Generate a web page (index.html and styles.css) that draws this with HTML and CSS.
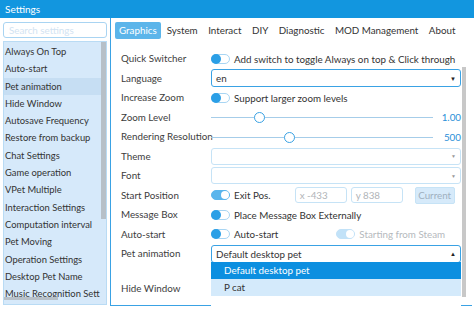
FILE: index.html
```html
<!DOCTYPE html>
<html>
<head>
<meta charset="utf-8">
<link rel="stylesheet" href="styles.css">
</head>
<body>
<div class="titlebar">Settings</div>
<div class="main">
  <aside class="sidebar">
    <div class="search">Search settings</div>
    <div class="list">
      <div class="items">
        <div class="item">Always On Top</div>
        <div class="item">Auto-start</div>
        <div class="item active">Pet animation</div>
        <div class="item">Hide Window</div>
        <div class="item">Autosave Frequency</div>
        <div class="item">Restore from backup</div>
        <div class="item">Chat Settings</div>
        <div class="item">Game operation</div>
        <div class="item">VPet Multiple</div>
        <div class="item">Interaction Settings</div>
        <div class="item">Computation interval</div>
        <div class="item">Pet Moving</div>
        <div class="item">Operation Settings</div>
        <div class="item">Desktop Pet Name</div>
        <div class="item">Music Recognition Sett</div>
      </div>
      <div class="vscroll"><div class="vthumb"></div></div>
      <div class="hscroll"></div>
    </div>
  </aside>
  <section class="panel">
    <nav class="tabs">
      <span class="tab selected">Graphics</span>
      <span class="tab">System</span>
      <span class="tab">Interact</span>
      <span class="tab">DIY</span>
      <span class="tab">Diagnostic</span>
      <span class="tab">MOD Management</span>
      <span class="tab">About</span>
    </nav>
    <div class="content">
      <div class="form">
        <div class="label">Quick Switcher</div>
        <div class="ctrl"><span class="toggle"></span><span>Add switch to toggle Always on top &amp; Click through</span></div>

        <div class="label">Language</div>
        <div class="ctrl"><div class="combo focus"><span>en</span><span class="arrow">▼</span></div></div>

        <div class="label">Increase Zoom</div>
        <div class="ctrl"><span class="toggle"></span><span>Support larger zoom levels</span></div>

        <div class="label">Zoom Level</div>
        <div class="ctrl slider-row"><div class="slider"><div class="track"></div><div class="knob" style="left: 43px"></div></div><span class="value">1.00</span></div>

        <div class="label">Rendering Resolution</div>
        <div class="ctrl slider-row"><div class="slider"><div class="track"></div><div class="knob" style="left: 73px"></div></div><span class="value">500</span></div>

        <div class="label">Theme</div>
        <div class="ctrl"><div class="combo"><span></span><span class="arrow small">▼</span></div></div>

        <div class="label">Font</div>
        <div class="ctrl"><div class="combo"><span></span><span class="arrow small">▼</span></div></div>

        <div class="label">Start Position</div>
        <div class="ctrl"><span class="toggle on"></span><span>Exit Pos.</span><span class="field fx">x -433</span><span class="field">y 838</span><span class="btn">Current</span></div>

        <div class="label">Message Box</div>
        <div class="ctrl"><span class="toggle"></span><span>Place Message Box Externally</span></div>

        <div class="label">Auto-start</div>
        <div class="ctrl"><span class="toggle"></span><span>Auto-start</span><span class="toggle on disabled"></span><span class="muted">Starting from Steam</span></div>

        <div class="label">Pet animation</div>
        <div class="ctrl"><div class="combo focus"><span>Default desktop pet</span><span class="arrow up">▲</span></div></div>

        <div class="label"></div>
        <div class="ctrl"></div>

        <div class="label">Hide Window</div>
        <div class="ctrl"></div>
      </div>
      <div class="popup">
        <div class="opt sel">Default desktop pet</div>
        <div class="opt">P cat</div>
      </div>
      <div class="cscroll"></div>
    </div>
  </section>
</div>
</body>
</html>
```

FILE: styles.css
```css
* { box-sizing: border-box; }
html, body { margin: 0; padding: 0; }
body {
  width: 474px;
  height: 320px;
  overflow: hidden;
  background: #fff;
  font-family: Lato, "Open Sans", sans-serif;
  font-size: 9.8px;
  color: #3a3a3a;
}
.titlebar {
  height: 18px;
  background: #1296df;
  color: #fff;
  font-size: 10px;
  line-height: 18px;
  padding-left: 5px;
}
.main {
  display: flex;
  height: 288px;
}
.sidebar {
  width: 110px;
  padding: 4px 3px 0 3px;
  display: flex;
  flex-direction: column;
  gap: 3px;
}
.search {
  height: 16px;
  border: 1px solid #a9d4f2;
  border-radius: 3px;
  color: #d2e3f2;
  padding-left: 5px;
  line-height: 14px;
}
.list {
  position: relative;
  height: 264px;
  background: #d6e9fa;
  border: 1px solid #b9dbf4;
  display: flex;
  overflow: hidden;
  font-size: 9.4px;
}
.items {
  flex: 1;
  overflow: hidden;
  padding-top: 1px;
}
.item {
  height: 17.3px;
  line-height: 17.3px;
  padding-left: 1px;
  white-space: nowrap;
  overflow: hidden;
  color: #333;
}
.item.active { background: #c6def3; }
.vscroll {
  width: 5px;
  background: #d6e9fa;
}
.vthumb {
  height: 177px;
  background: #b7c0c8;
}
.hscroll {
  position: absolute;
  left: 0;
  bottom: 4px;
  width: 54px;
  height: 3px;
  background: #b7c0c8;
}
.panel {
  width: 362px;
  height: 288px;
  border-left: 1px solid #3aa2e4;
  border-bottom: 1px solid #3aa2e4;
  padding: 4px 0 0 4px;
  display: flex;
  flex-direction: column;
}
.tabs {
  display: flex;
  height: 17px;
}
.tab {
  line-height: 17px;
  color: #333;
  margin-right: 10.5px;
  white-space: nowrap;
}
.tab.selected {
  background: #5cb5ea;
  color: #fff;
  border-radius: 2px;
  padding: 0 4px;
  margin-right: 6px;
}
.content {
  position: relative;
  flex: 1;
}
.form {
  display: grid;
  grid-template-columns: 90px 250px;
  grid-template-rows: repeat(11, 19.5px) 15px 19.5px;
  padding: 10px 0 0 6px;
}
.label {
  line-height: 19px;
  white-space: nowrap;
  color: #3d3d3d;
}
.ctrl {
  display: flex;
  align-items: center;
  gap: 4px;
  white-space: nowrap;
  color: #333;
}
.toggle {
  position: relative;
  width: 19px;
  height: 10px;
  border: 1px solid #a8d5f3;
  border-radius: 5px;
  background: #fff;
  flex: none;
}
.toggle::after {
  content: "";
  position: absolute;
  left: -1px;
  top: -1px;
  width: 10px;
  height: 10px;
  border-radius: 50%;
  background: #2b9fe6;
}
.toggle.on {
  background: #5ab5ec;
  border-color: #5ab5ec;
}
.toggle.on::after {
  left: auto;
  right: 0;
  top: 0;
  width: 8px;
  height: 8px;
  background: #fff;
}
.toggle.disabled {
  background: #c2e2f8;
  border-color: #c2e2f8;
  margin-left: 54px;
}
.muted { color: #b5b9bd; }
.combo {
  width: 250px;
  height: 17px;
  border: 1px solid #c6e3f6;
  border-radius: 3px;
  display: flex;
  justify-content: space-between;
  align-items: center;
  padding: 0 4px 0 4px;
  background: #fff;
}
.combo.focus { border-color: #3aa2e4; border-width: 1.5px; height: 18px; }
.arrow { font-size: 6px; color: #222; }
.arrow.small { color: #999; font-size: 5px; }
.slider-row { gap: 6px; }
.slider {
  position: relative;
  width: 222px;
  height: 12px;
}
.track {
  position: absolute;
  left: 0;
  right: 0;
  top: 6px;
  height: 1px;
  background: #a6cde9;
}
.knob {
  position: absolute;
  top: 1px;
  width: 11px;
  height: 11px;
  border: 1.5px solid #3aa2e4;
  border-radius: 50%;
  background: #fff;
}
.value {
  color: #2a8fd8;
  width: 22px;
  text-align: right;
}
.field {
  width: 52px;
  height: 16px;
  border: 1px solid #c6e3f6;
  border-radius: 3px;
  color: #b0b4b8;
  padding-left: 4px;
  line-height: 14px;
}
.field.fx { margin-left: 20px; }
.btn {
  margin-left: 8px;
  width: 40px;
  height: 17px;
  background: #d6eafa;
  border: 1px solid #c6e3f6;
  border-radius: 2px;
  color: #9fb0bf;
  text-align: center;
  line-height: 15px;
}
.popup {
  position: absolute;
  left: 96px;
  top: 223px;
  width: 250px;
  height: 50px;
  background: #fff;
}
.opt {
  height: 17px;
  line-height: 17px;
  padding-left: 13px;
  background: #d4eafb;
  color: #333;
}
.opt.sel {
  background: #0c8fe0;
  color: #fff;
}
.cscroll {
  position: absolute;
  left: 347px;
  top: 28px;
  width: 4px;
  height: 230px;
  background: #c8c8c8;
}
```
